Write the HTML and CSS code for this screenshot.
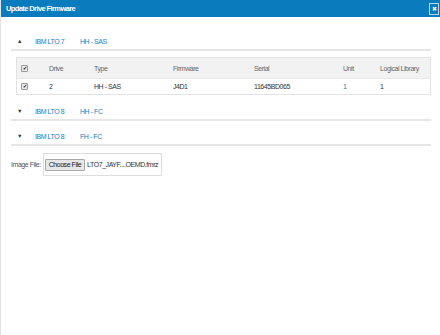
FILE: index.html
```html
<!DOCTYPE html>
<html lang="en">
<head>
    <meta charset="UTF-8">
    <title>Update Drive Firmware</title>
    <link rel="stylesheet" href="styles.css">
</head>
<body>
    <div class="dialog">
        <div class="titlebar">
            <span class="title">Update Drive Firmware</span>
            <button class="close">&#x2716;</button>
        </div>
        <div class="content">
            <div class="group open">
                <div class="group-head">
                    <span class="arrow">&#9650;</span>
                    <span class="model">IBM LTO 7</span>
                    <span class="kind">HH - SAS</span>
                </div>
                <table class="drives">
                    <tr>
                        <th class="chk"><span class="box">&#10004;</span></th>
                        <th class="c-drive">Drive</th>
                        <th class="c-type">Type</th>
                        <th class="c-fw">Firmware</th>
                        <th class="c-serial">Serial</th>
                        <th class="c-unit">Unit</th>
                        <th>Logical Library</th>
                    </tr>
                    <tr>
                        <td class="chk"><span class="box">&#10004;</span></td>
                        <td>2</td>
                        <td>HH - SAS</td>
                        <td>J4D1</td>
                        <td>11645BD065</td>
                        <td class="link">1</td>
                        <td>1</td>
                    </tr>
                </table>
            </div>
            <div class="group">
                <div class="group-head">
                    <span class="arrow">&#9660;</span>
                    <span class="model">IBM LTO 8</span>
                    <span class="kind">HH - FC</span>
                </div>
            </div>
            <div class="group">
                <div class="group-head">
                    <span class="arrow">&#9660;</span>
                    <span class="model">IBM LTO 8</span>
                    <span class="kind">FH - FC</span>
                </div>
            </div>
            <div class="file-row">
                <label>Image File:</label>
                <div class="file-box">
                    <span class="file-btn">Choose File</span>
                    <span class="file-name">LTO7_JAYF....OEMD.fmrz</span>
                </div>
            </div>
        </div>
    </div>
</body>
</html>
```

FILE: styles.css
```css
body {
    margin: 0;
    font-family: "Liberation Sans", Arial, sans-serif;
    font-size: 7px;
    letter-spacing: -0.45px;
    color: #333;
    background: #fff;
}
.dialog {
    height: 335px;
    border-left: 1px solid #e3e3e3;
    box-sizing: border-box;
}
.titlebar {
    height: 17px;
    background: #0a7bbd;
    display: flex;
    align-items: center;
    justify-content: space-between;
    padding: 0 1px 0 5px;
}
.title {
    color: #fff;
    font-weight: bold;
    font-size: 7.5px;
    letter-spacing: -0.6px;
}
.close {
    width: 10px;
    height: 12px;
    padding: 0;
    border: 1px solid #b9d6ea;
    background: #0a7bbd;
    color: #fff;
    font-size: 6px;
    line-height: 10px;
    letter-spacing: 0;
}
.content {
    padding: 16px 9px 0 10px;
}
.group-head {
    display: flex;
    align-items: center;
    height: 16px;
    border-bottom: 2px solid #e6e6e6;
    padding-left: 6px;
    color: #1b7dbf;
    margin-bottom: 7px;
}
.arrow {
    color: #333;
    font-size: 5.5px;
    width: 18px;
    letter-spacing: 0;
}
.model {
    width: 45px;
}
.drives {
    margin: -1px 0 8px 5px;
    width: calc(100% - 5px);
    border-collapse: collapse;
    border: 1px solid #e3e3e3;
    text-align: left;
}
.drives th {
    background: #f2f2f2;
    color: #666;
    font-weight: normal;
    height: 20px;
    padding: 0;
}
.drives td {
    height: 15px;
    padding: 0;
    border-top: 1px solid #e8e8e8;
}
.box {
    display: inline-block;
    width: 5px;
    height: 5px;
    margin-left: 4px;
    border: 1px solid #999;
    border-radius: 1px;
    background: #e8e8e8;
    color: #111;
    font-size: 5px;
    line-height: 5px;
    letter-spacing: 0;
    text-align: center;
    vertical-align: middle;
}
.chk { width: 32px; }
.c-drive { width: 45px; }
.c-type { width: 79px; }
.c-fw { width: 81px; }
.c-serial { width: 89px; }
.c-unit { width: 37px; }
.link { color: #1b7dbf; }
.file-row {
    display: flex;
    align-items: center;
}
.file-row label {
    color: #555;
    margin-right: 2px;
}
.file-box {
    display: flex;
    align-items: center;
    border: 1px solid #ddd;
    padding: 0 3px 0 1px;
    height: 21px;
}
.file-btn {
    border: 1px solid #a9a9a9;
    border-radius: 1px;
    background: #e6e6e6;
    padding: 0 3px;
    height: 10px;
    line-height: 10px;
    margin-right: 2px;
    color: #222;
}
```
